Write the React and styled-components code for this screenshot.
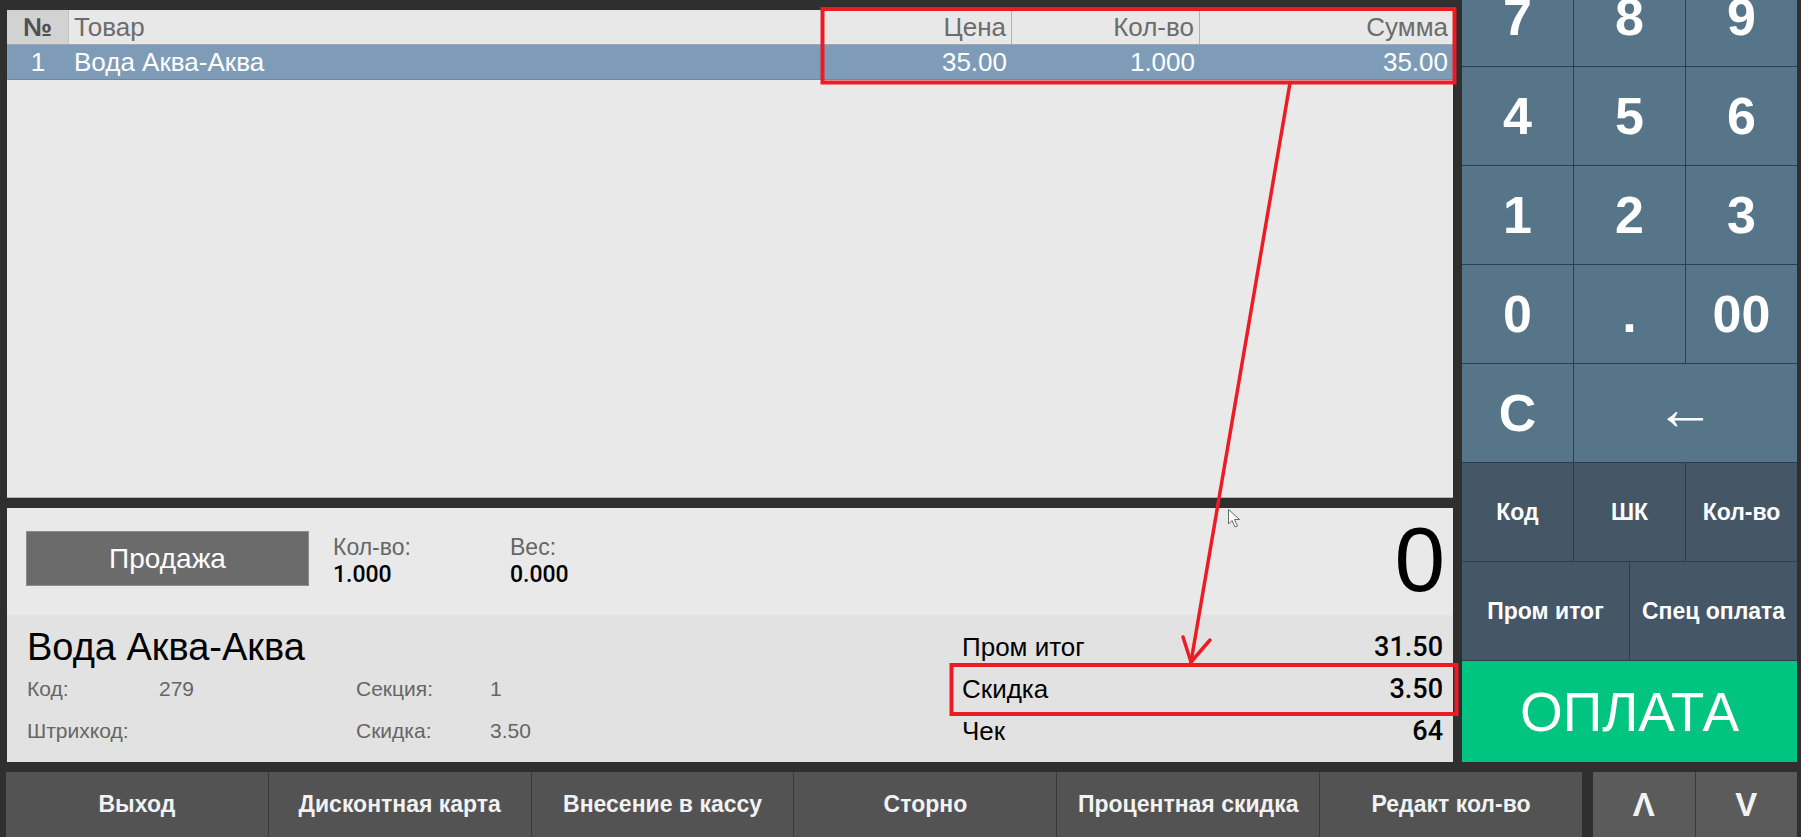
import React from 'react';
import styled, { createGlobalStyle } from 'styled-components';

const Global = createGlobalStyle`
  html, body { margin: 0; padding: 0; background: #2f2f30; }
  body { font-family: "Liberation Sans", Arial, sans-serif; }
  * { box-sizing: border-box; }
`;

const Screen = styled.div`
  position: relative;
  width: 1801px;
  height: 837px;
  overflow: hidden;
  background: #2f2f30;
  display: flex;
  flex-direction: column;
  padding: 0 4px 0 6px;
`;

const Main = styled.div`
  display: flex;
  height: 762px;
  gap: 9px;
  padding-left: 1px;
`;

const LeftCol = styled.div`
  width: 1446px;
  padding-top: 10px;
  display: flex;
  flex-direction: column;
  gap: 10px;
`;

/* ---------- table ---------- */
const TablePanel = styled.div`
  height: 488px;
  background: #e9e9e9;
  border-bottom: 1px solid #b4b4b4;
`;

const Row = styled.div`
  display: grid;
  grid-template-columns: 62px 753px 190px 188px 253px;
  height: 35px;
  font-size: 26px;
  ${(p) =>
    p.$head
      ? `background: #e8e8e8; color: #6c6c6c; border-bottom: 1px solid #a3a8ad;`
      : `background: #7e9cb8; color: #ffffff; border-bottom: 1px solid #6c879f;`}
`;

const Cell = styled.div`
  display: flex;
  align-items: center;
  padding: 0 5px;
  white-space: nowrap;
  justify-content: ${(p) => (p.$align === 'right' ? 'flex-end' : p.$align === 'center' ? 'center' : 'flex-start')};
  ${(p) => (p.$num && p.$head ? 'background: #d2d2d2; border-right: 1px solid #c2c2c2; color: #505050; font-weight: 700;' : '')}
  ${(p) => (p.$sep ? 'border-right: 1px solid #b3b3b3;' : '')}
`;

/* ---------- info panel ---------- */
const InfoPanel = styled.div`
  height: 254px;
  display: flex;
  flex-direction: column;
`;

const TopSection = styled.div`
  height: 107px;
  background: #e9e9ea;
  display: flex;
  align-items: flex-start;
  padding: 0 8px 0 19px;
`;

const ModeButton = styled.div`
  margin-top: 23px;
  width: 283px;
  height: 55px;
  background: #6b6b6b;
  border: 1px solid #8c8c8c;
  color: #ffffff;
  font-size: 28px;
  display: flex;
  align-items: center;
  justify-content: center;
`;

const Stat = styled.div`
  margin-top: 25px;
  margin-left: ${(p) => p.$ml || 0}px;
  width: ${(p) => p.$w || 150}px;
  display: flex;
  flex-direction: column;
`;

const StatLabel = styled.div`
  font-size: 23px;
  line-height: 28px;
  color: #666666;
`;

const StatValue = styled.div`
  font-family: Roboto, "Liberation Sans", Arial, sans-serif;
  font-weight: 500;
  font-size: 23px;
  line-height: 28px;
  color: #000000;
`;

const BigNumber = styled.div`
  margin-left: auto;
  margin-top: 6px;
  font-size: 91px;
  line-height: 91px;
  color: #000000;
`;

const BottomSection = styled.div`
  flex: 1;
  background: #e2e2e2;
  display: flex;
`;

const ProductInfo = styled.div`
  flex: 1;
  padding: 11px 0 0 20px;
`;

const ProductName = styled.div`
  font-size: 38px;
  line-height: 42px;
  color: #000000;
`;

const InfoGrid = styled.div`
  display: grid;
  grid-template-columns: 132px 197px 134px auto;
  font-size: 21px;
  line-height: 42px;
  color: #666666;
`;

const Summary = styled.div`
  width: 481px;
  margin-right: 10px;
  padding-top: 11px;
`;

const SumRow = styled.div`
  display: flex;
  justify-content: space-between;
  align-items: baseline;
  font-size: 26px;
  line-height: 42px;
  color: #000000;
`;

const SumValue = styled.span`
  font-family: Roboto, "Liberation Sans", Arial, sans-serif;
  font-weight: 500;
  font-size: 27px;
`;

/* ---------- keypad ---------- */
const Keypad = styled.div`
  width: 335px;
  height: 762px;
  overflow: hidden;
  display: flex;
  flex-direction: column;
  gap: 1px;
  background: #2c3d4c;
`;

const DigitGrid = styled.div`
  margin-top: -32px;
  display: grid;
  grid-template-columns: repeat(3, 1fr);
  grid-auto-rows: 98px;
  gap: 1px;
`;

const Key = styled.div`
  grid-column: span ${(p) => p.$span || 1};
  background: ${(p) => p.$bg || '#567589'};
  color: #ffffff;
  font-size: ${(p) => p.$size || 52}px;
  font-weight: ${(p) => (p.$thin ? 400 : 700)};
  padding-bottom: ${(p) => p.$lift || 0}px;
  display: flex;
  align-items: center;
  justify-content: center;
  white-space: nowrap;
`;

const FuncRow = styled.div`
  height: 98px;
  display: grid;
  grid-template-columns: repeat(${(p) => p.$cols}, 1fr);
  gap: 1px;
`;

const PayButton = styled.div`
  height: 101px;
  background: #00c47f;
  color: #ffffff;
  font-size: 55px;
  display: flex;
  align-items: center;
  justify-content: center;
`;

/* ---------- bottom bar ---------- */
const BottomBar = styled.div`
  margin-top: 10px;
  height: 65px;
  display: flex;
  gap: 11px;
`;

const BarGroup = styled.div`
  width: ${(p) => p.$w}px;
  display: flex;
  gap: 1px;
  background: #3a3a3a;
`;

const BarButton = styled.div`
  flex: 1;
  background: ${(p) => p.$bg || '#535353'};
  color: #f2f2f2;
  font-size: ${(p) => p.$size || 23}px;
  font-weight: 700;
  display: flex;
  align-items: center;
  justify-content: center;
  white-space: nowrap;
`;

/* ---------- annotation overlay ---------- */
const Overlay = styled.svg`
  position: absolute;
  left: 0;
  top: 0;
  pointer-events: none;
`;

const columns = [
  { key: 'n', title: '№', align: 'center', num: true },
  { key: 'name', title: 'Товар', align: 'left' },
  { key: 'price', title: 'Цена', align: 'right', sep: true },
  { key: 'qty', title: 'Кол-во', align: 'right', sep: true },
  { key: 'sum', title: 'Сумма', align: 'right' },
];

const items = [{ n: '1', name: 'Вода Аква-Аква', price: '35.00', qty: '1.000', sum: '35.00' }];

const digits = ['7', '8', '9', '4', '5', '6', '1', '2', '3', '0', '.', '00'];
const bottomButtons = ['Выход', 'Дисконтная карта', 'Внесение в кассу', 'Сторно', 'Процентная скидка', 'Редакт кол-во'];

const totals = [
  ['Пром итог', '31.50'],
  ['Скидка', '3.50'],
  ['Чек', '64'],
];

export default function App() {
  return (
    <>
      <Global />
      <Screen>
        <Main>
          <LeftCol>
            <TablePanel>
              <Row $head>
                {columns.map((c) => (
                  <Cell key={c.key} $head $num={c.num} $sep={c.sep} $align={c.align}>
                    {c.title}
                  </Cell>
                ))}
              </Row>
              {items.map((it) => (
                <Row key={it.n}>
                  {columns.map((c) => (
                    <Cell key={c.key} $align={c.align}>
                      {it[c.key]}
                    </Cell>
                  ))}
                </Row>
              ))}
            </TablePanel>

            <InfoPanel>
              <TopSection>
                <ModeButton>Продажа</ModeButton>
                <Stat $ml={24} $w={177}>
                  <StatLabel>Кол-во:</StatLabel>
                  <StatValue>1.000</StatValue>
                </Stat>
                <Stat $w={150}>
                  <StatLabel>Вес:</StatLabel>
                  <StatValue>0.000</StatValue>
                </Stat>
                <BigNumber>0</BigNumber>
              </TopSection>
              <BottomSection>
                <ProductInfo>
                  <ProductName>Вода Аква-Аква</ProductName>
                  <InfoGrid>
                    <span>Код:</span>
                    <span>279</span>
                    <span>Секция:</span>
                    <span>1</span>
                    <span>Штрихкод:</span>
                    <span></span>
                    <span>Скидка:</span>
                    <span>3.50</span>
                  </InfoGrid>
                </ProductInfo>
                <Summary>
                  {totals.map(([label, value]) => (
                    <SumRow key={label}>
                      <span>{label}</span>
                      <SumValue>{value}</SumValue>
                    </SumRow>
                  ))}
                </Summary>
              </BottomSection>
            </InfoPanel>
          </LeftCol>

          <Keypad>
            <DigitGrid>
              {digits.map((d) => (
                <Key key={d}>{d}</Key>
              ))}
              <Key>C</Key>
              <Key $span={2} $thin $size={60} $lift={10}>←</Key>
            </DigitGrid>
            <FuncRow $cols={3}>
              <Key $bg="#455667" $size={23}>Код</Key>
              <Key $bg="#455667" $size={23}>ШК</Key>
              <Key $bg="#455667" $size={23}>Кол-во</Key>
            </FuncRow>
            <FuncRow $cols={2}>
              <Key $bg="#455667" $size={23}>Пром итог</Key>
              <Key $bg="#455667" $size={23}>Спец оплата</Key>
            </FuncRow>
            <PayButton>ОПЛАТА</PayButton>
          </Keypad>
        </Main>

        <BottomBar>
          <BarGroup $w={1576}>
            {bottomButtons.map((b) => (
              <BarButton key={b}>{b}</BarButton>
            ))}
          </BarGroup>
          <BarGroup $w={204}>
            <BarButton $bg="#5b5b5b" $size={33}>Λ</BarButton>
            <BarButton $bg="#5b5b5b" $size={33}>V</BarButton>
          </BarGroup>
        </BottomBar>

        <Overlay width="1801" height="837" viewBox="0 0 1801 837">
          <g fill="none" stroke="#ed1c24" strokeWidth="4">
            <rect x="822.5" y="9" width="632" height="73.5" />
            <rect x="951.5" y="665" width="505" height="49" />
          </g>
          <g stroke="#ed1c24" strokeWidth="3.5" strokeLinecap="round" fill="none">
            <line x1="1290" y1="83" x2="1191" y2="662" />
            <line x1="1191" y1="662" x2="1183" y2="637" />
            <line x1="1191" y1="662" x2="1210" y2="640" />
          </g>
          <path
            d="M1228.5 509.5 L1228.5 524 L1232 520.5 L1235 527 L1237.5 526 L1234.5 519.5 L1239.5 519.5 Z"
            fill="#ffffff"
            stroke="#666666"
            strokeWidth="1"
          />
        </Overlay>
      </Screen>
    </>
  );
}
